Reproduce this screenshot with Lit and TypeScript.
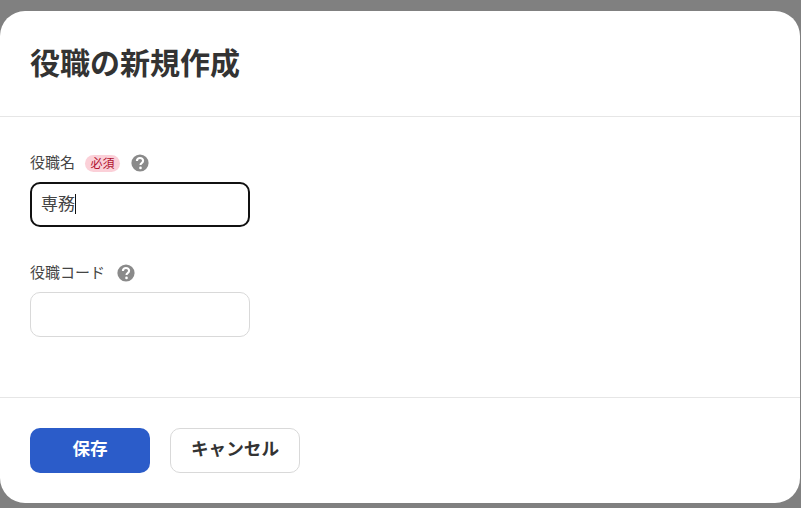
import { LitElement, html, css } from "lit";
import { customElement } from "lit/decorators.js";

const help = (cls = "") => html`<svg class="help ${cls}" viewBox="0 0 18 18" width="18" height="18" aria-hidden="true">
  <circle cx="9" cy="9" r="8.6" fill="#8a8a8a"></circle>
  <path d="M5.9 7c0-1.9 1.3-3 3.1-3 1.8 0 3.1 1.1 3.1 2.7 0 1.2-.7 1.8-1.5 2.4-.8.5-1.1.9-1.1 1.8" fill="none" stroke="#fff" stroke-width="2.1"></path>
  <circle cx="9.5" cy="13.9" r="1.3" fill="#fff"></circle>
</svg>`;

@customElement("app-root")
export class AppRoot extends LitElement {
  static styles = css`
    :host {
      display: block;
      width: 801px;
      height: 508px;
      box-sizing: border-box;
      padding: 11px 1px 5px 0;
      background: #808080;
      font-family: "Noto Sans CJK JP", "Noto Sans", sans-serif;
      color: #333;
    }
    .modal {
      height: 492px;
      background: #fff;
      border-radius: 25px;
      display: flex;
      flex-direction: column;
    }
    .head {
      height: 106px;
      box-sizing: border-box;
      padding: 0 30px 5px;
      display: flex;
      align-items: center;
      border-bottom: 1px solid #e6e6e6;
    }
    h1 {
      margin: 0;
      font-size: 30px;
      line-height: 40px;
      font-weight: 700;
    }
    .body {
      flex: 1;
      padding: 35px 30px 0;
      display: flex;
      flex-direction: column;
      gap: 35px;
    }
    .field {
      display: flex;
      flex-direction: column;
      gap: 8px;
    }
    .label {
      height: 22px;
      display: flex;
      align-items: center;
      font-size: 15px;
      line-height: 22px;
      color: #444;
    }
    .label-text {
      margin-bottom: 2px;
    }
    .badge {
      margin-left: 10px;
      width: 35px;
      height: 17px;
      border-radius: 9px;
      background: #fbd0d8;
      color: #b0122f;
      font-size: 12px;
      line-height: 16px;
      text-align: center;
    }
    .help {
      margin-left: 11px;
    }
    .help.wide {
      margin-left: 12px;
    }
    .input {
      width: 220px;
      height: 45px;
      box-sizing: border-box;
      border: 1px solid #d9d9d9;
      border-radius: 10px;
      padding: 0 11px 4px;
      display: flex;
      align-items: center;
      font-size: 17px;
      color: #444;
    }
    .input.focus {
      border: 2px solid #111;
      padding: 0 9px 4px;
    }
    .caret {
      width: 1px;
      height: 20px;
      margin-top: 2px;
      background: #111;
    }
    .foot {
      height: 106px;
      box-sizing: border-box;
      padding: 30px 30px 0;
      border-top: 1px solid #e6e6e6;
      display: flex;
      align-items: flex-start;
      gap: 20px;
    }
    .btn {
      height: 45px;
      box-sizing: border-box;
      border-radius: 10px;
      padding-bottom: 6px;
      display: flex;
      align-items: center;
      justify-content: center;
      font-size: 17.6px;
      font-weight: 700;
    }
    .primary {
      width: 120px;
      background: #2b5cc9;
      color: #fff;
    }
    .secondary {
      width: 130px;
      background: #fff;
      border: 1px solid #d9d9d9;
    }
  `;

  render() {
    return html`<div class="modal">
      <div class="head"><h1>役職の新規作成</h1></div>
      <div class="body">
        <div class="field">
          <div class="label"><span class="label-text">役職名</span><span class="badge">必須</span>${help()}</div>
          <div class="input focus">専務<span class="caret"></span></div>
        </div>
        <div class="field">
          <div class="label"><span class="label-text">役職コード</span>${help("wide")}</div>
          <div class="input"></div>
        </div>
      </div>
      <div class="foot">
        <div class="btn primary">保存</div>
        <div class="btn secondary">キャンセル</div>
      </div>
    </div>`;
  }
}
